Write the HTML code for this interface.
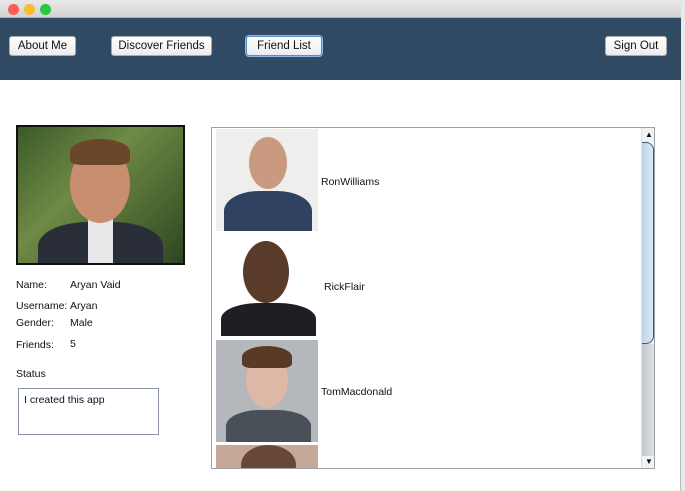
<!DOCTYPE html>
<html><head><meta charset="utf-8"><style>
*{margin:0;padding:0;box-sizing:border-box}
body{width:685px;height:491px;overflow:hidden;background:#e8e8e8;font-family:"Liberation Sans",sans-serif;font-size:10.5px;color:#111;position:relative}
.win{position:absolute;left:0;top:0;width:681px;height:491px;background:#fff;border-right:1px solid #bbb}
.title{position:absolute;left:0;top:0;width:681px;height:18px;background:linear-gradient(#e8e8e8,#d3d3d3);border-bottom:1px solid #b0b0b0}
.dot{position:absolute;top:4px;width:11px;height:11px;border-radius:50%}
.nav{position:absolute;left:0;top:18px;width:681px;height:62px;background:#2f4a62}
.btn{position:absolute;top:18px;height:20px;background:linear-gradient(#fff,#ececec);border:1px solid #aaa;border-radius:3px;font-size:11.5px;text-align:center;line-height:18px;color:#111}
.a{position:absolute}
.ph{position:absolute;overflow:hidden}
.head{position:absolute;border-radius:50%}
.body{position:absolute;border-radius:40% 40% 0 0}
</style></head><body>
<div class="win">
<div class="title">
<div class="dot" style="left:8px;background:#fc5f57"></div>
<div class="dot" style="left:24px;background:#fdbc2e"></div>
<div class="dot" style="left:40px;background:#28c840"></div>
</div>
<div class="nav">
<div class="btn" style="left:9px;width:67px">About Me</div>
<div class="btn" style="left:111px;width:101px">Discover Friends</div>
<div class="btn" style="left:246px;width:76px;border:1px solid #5a8fc8;box-shadow:0 0 0 1px #8fb8e6">Friend List</div>
<div class="btn" style="left:605px;width:62px">Sign Out</div>
</div>

<div class="ph" style="left:16px;top:125px;width:169px;height:140px;border:2px solid #111;background:linear-gradient(135deg,#3c5a2a,#6f8a45 40%,#2e4620)">
<div class="body" style="left:20px;top:95px;width:125px;height:60px;background:#2a2e38"></div>
<div style="position:absolute;left:70px;top:90px;width:25px;height:50px;background:#e8e8ea"></div>
<div class="head" style="left:52px;top:18px;width:60px;height:78px;background:#c98e70"></div>
<div style="position:absolute;left:52px;top:12px;width:60px;height:26px;border-radius:50% 50% 20% 20%;background:#6b4628"></div>
</div>

<div class="a" style="left:16px;top:279px">Name:</div><div class="a" style="left:70px;top:279px">Aryan Vaid</div>
<div class="a" style="left:16px;top:300px">Username:</div><div class="a" style="left:70px;top:300px">Aryan</div>
<div class="a" style="left:16px;top:317px">Gender:</div><div class="a" style="left:70px;top:317px">Male</div>
<div class="a" style="left:16px;top:339px">Friends:</div><div class="a" style="left:70px;top:338px">5</div>
<div class="a" style="left:16px;top:368px">Status</div>
<div class="a" style="left:18px;top:388px;width:141px;height:47px;border:1px solid #8a93a8;padding:5px 0 0 5px">I created this app</div>

<div class="a" style="left:211px;top:127px;width:444px;height:342px;border:1px solid #9aa0aa;background:#fff;overflow:hidden">
<div class="ph" style="left:4px;top:1px;width:102px;height:102px;background:#eeeeec">
<div class="body" style="left:8px;top:62px;width:88px;height:50px;background:#2f4260"></div>
<div class="head" style="left:33px;top:8px;width:38px;height:52px;background:#c99a80"></div>
</div>
<div class="a" style="left:109px;top:48px">RonWilliams</div>
<div class="ph" style="left:4px;top:107px;width:102px;height:101px;background:#fff">
<div class="body" style="left:5px;top:68px;width:95px;height:40px;background:#1f1e24"></div>
<div class="head" style="left:27px;top:6px;width:46px;height:62px;background:#5a3a28"></div>
</div>
<div class="a" style="left:112px;top:153px">RickFlair</div>
<div class="ph" style="left:4px;top:212px;width:102px;height:102px;background:#b4b8bc">
<div class="body" style="left:10px;top:70px;width:85px;height:40px;background:#4a5058"></div>
<div class="head" style="left:30px;top:12px;width:42px;height:56px;background:#ddb8a4"></div>
<div style="position:absolute;left:26px;top:6px;width:50px;height:22px;border-radius:50% 50% 20% 20%;background:#5a3a26"></div>
</div>
<div class="a" style="left:109px;top:258px">TomMacdonald</div>
<div class="ph" style="left:4px;top:317px;width:102px;height:23px;background:#c5a898">
<div class="head" style="left:25px;top:0px;width:55px;height:40px;background:#6a4638"></div>
</div>
<div class="a" style="left:429px;top:0;width:13px;height:340px;background:#f3f3f3;border-left:1px solid #ddd">
<div style="position:absolute;left:3px;top:2px;font-size:8px">▲</div>
<div style="position:absolute;left:0;top:14px;width:12px;height:202px;background:linear-gradient(90deg,#bcd5ea,#dbe9f5);border:1px solid #3a5a7a;border-left:none;border-radius:0 8px 8px 0"></div>
<div style="position:absolute;left:0;top:216px;width:12px;height:112px;background:linear-gradient(90deg,#c4c8cf,#dfe1e5)"></div>
<div style="position:absolute;left:3px;top:329px;font-size:8px">▼</div>
</div>
</div>
</div>
</body></html>
